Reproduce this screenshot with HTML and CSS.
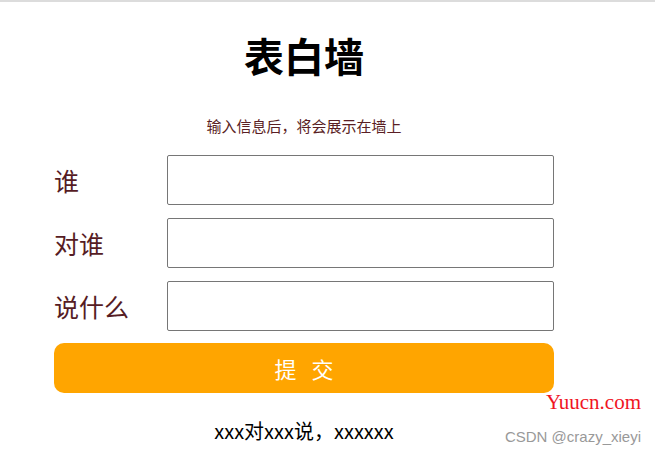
FILE: index.html
```html
<!DOCTYPE html>
<html lang="zh-CN">
<head>
    <meta charset="UTF-8">
    <meta name="viewport" content="width=device-width, initial-scale=1.0">
    <title>表白墙</title>
    <link rel="stylesheet" href="styles.css">
</head>
<body>
<div class="topline"></div>
<div class="container">
    <h1>表白墙</h1>
    <p class="tip">输入信息后，将会展示在墙上</p>
    <div class="row">
        <span class="label">谁</span>
        <input type="text" class="edit">
    </div>
    <div class="row">
        <span class="label">对谁</span>
        <input type="text" class="edit">
    </div>
    <div class="row">
        <span class="label">说什么</span>
        <input type="text" class="edit">
    </div>
    <button class="submit">提 交</button>
    <div class="msg">xxx对xxx说，xxxxxx</div>
</div>
<div class="mark">
    <span class="site">Yuucn.com</span>
    <span class="author">CSDN @crazy_xieyi</span>
</div>
</body>
</html>
```

FILE: styles.css
```css
* {
    box-sizing: border-box;
}

body {
    margin: 0;
    background-color: #fff;
    font-family: "Noto Sans CJK SC", "Liberation Sans", sans-serif;
    position: relative;
    height: 458px;
    overflow: hidden;
}

.topline {
    height: 2px;
    background-color: #dcdcdc;
}

.container {
    width: 500px;
    margin-left: 54px;
    display: flex;
    flex-direction: column;
}

h1 {
    margin: 27px 0 0;
    height: 52px;
    text-align: center;
    font-size: 40px;
    line-height: 52px;
    font-weight: bold;
    color: #000;
}

.tip {
    margin: 35px 0 0;
    text-align: center;
    font-size: 15px;
    line-height: 20px;
    color: #5a1e24;
}

.row {
    display: flex;
    align-items: center;
    margin-top: 18px;
    height: 51px;
}

.row + .row {
    margin-top: 12px;
}

.label {
    width: 113px;
    font-size: 25px;
    color: #561c24;
}

.edit {
    width: 387px;
    height: 50px;
    border: 1px solid #767676;
    border-radius: 2px;
    font-size: 18px;
    padding: 0 8px;
}

.submit {
    margin-top: 12px;
    width: 500px;
    height: 50px;
    border: none;
    border-radius: 10px;
    background-color: #ffa500;
    color: #fff;
    font-family: "Noto Sans CJK SC", sans-serif;
    font-size: 22px;
    letter-spacing: 5px;
    padding-left: 11px;
    cursor: pointer;
}

.msg {
    margin-top: 26px;
    text-align: center;
    font-size: 20px;
    line-height: 24px;
    color: #000;
}

.mark {
    position: absolute;
    right: 14px;
    top: 390px;
    display: flex;
    flex-direction: column;
    align-items: flex-end;
}

.site {
    font-family: "Liberation Serif", serif;
    font-size: 21px;
    color: #f0151f;
    line-height: 24px;
}

.author {
    margin-top: 14px;
    font-family: "Liberation Sans", sans-serif;
    font-size: 15px;
    color: #999;
    line-height: 18px;
}
```
